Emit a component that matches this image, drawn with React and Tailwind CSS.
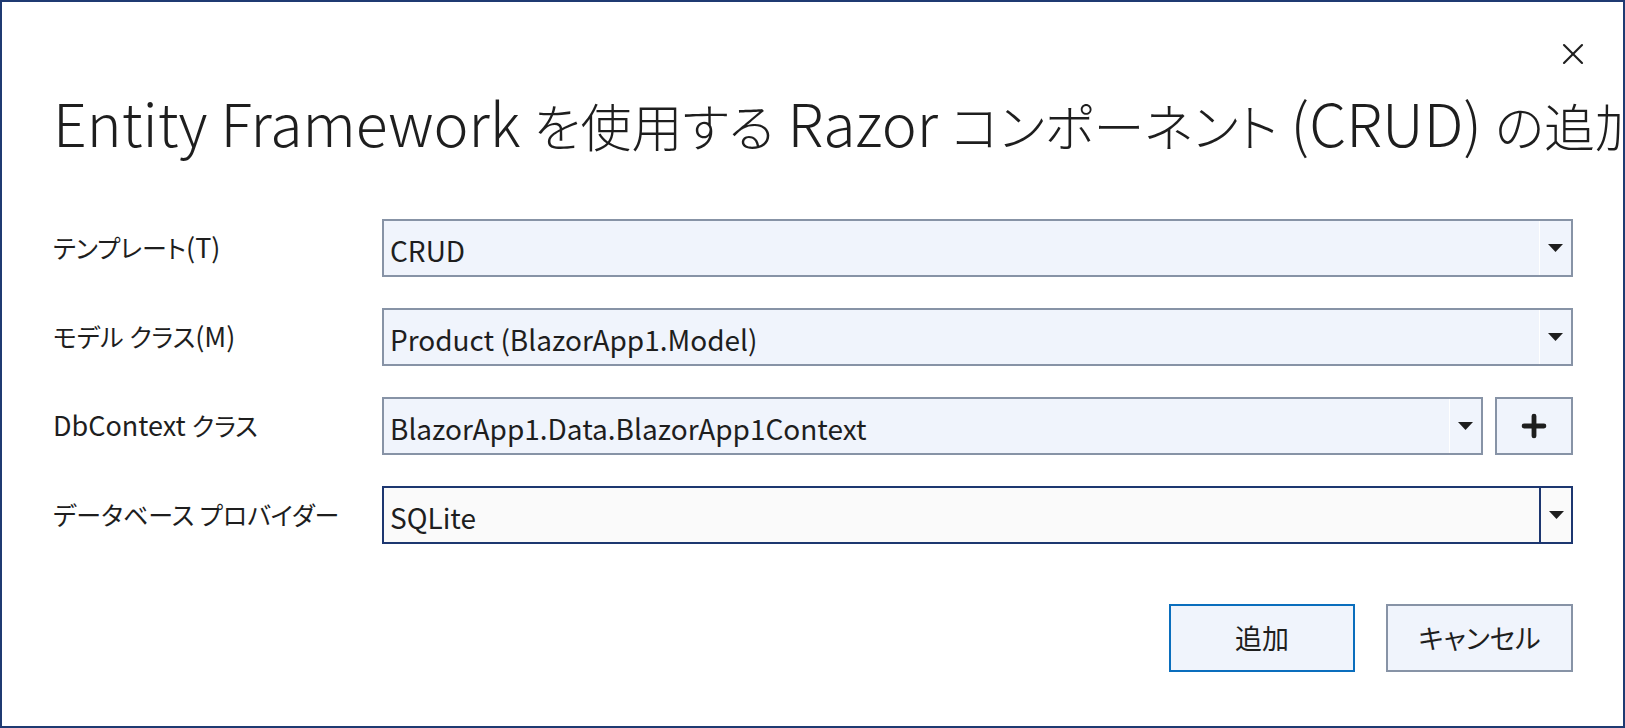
import { X, Plus } from "lucide-react";

const font = { fontFamily: '"Noto Sans CJK JP", "Noto Sans", sans-serif' };

function Caret() {
  return (
    <svg width="15" height="8" viewBox="0 0 15 8">
      <path d="M0 0h15L7.5 8z" fill="#1e1e1e" />
    </svg>
  );
}

function Combo({ value, active }) {
  return (
    <div
      className={`flex h-[58px] flex-1 items-stretch border-2 ${
        active ? "border-[#1d3770] bg-[#fafafa]" : "border-[#8793a6] bg-[#f0f4fc]"
      }`}
    >
      <div className="flex flex-1 items-center pl-[6px] pt-[4px] text-[28px] text-[#1e1e1e]">{value}</div>
      <div className={`flex w-[32px] items-center justify-center ${active ? "border-l-2 border-[#1d3770]" : "border-l border-white"}`}>
        <Caret />
      </div>
    </div>
  );
}

// japanese runs are set a bit smaller than the latin ones
const J = ({ children }) => <span className="text-[25px]">{children}</span>;
const T = ({ children }) => <span className="text-[51px]">{children}</span>;

const rows = [
  { label: <><J>テンプレート</J>(T)</>, value: "CRUD" },
  { label: <><J>モデル クラス</J>(M)</>, value: "Product (BlazorApp1.Model)" },
  { label: <>DbContext <J>クラス</J></>, value: "BlazorApp1.Data.BlazorApp1Context", plus: true },
  { label: <J>データベース プロバイダー</J>, value: "SQLite", active: true },
];

export default function App() {
  return (
    <div style={font} className="flex h-[728px] w-[1625px] flex-col overflow-hidden border-2 border-[#1f3a72] bg-white text-[#1e1e1e] [font-feature-settings:'palt']">
      <div className="flex justify-end pr-[32px] pt-[34px]">
        <X size={36} strokeWidth={1.4} />
      </div>
      <h1 className="mt-[14px] whitespace-nowrap pl-[51px] text-[59px] font-light leading-[72px]">
        Entity Framework <T>を使用する</T> Razor <T>コンポーネント</T> (CRUD) <T>の追加</T>
      </h1>
      <div className="mt-[58px] flex flex-col gap-[31px] pl-[51px] pr-[50px]">
        {rows.map((r, i) => (
          <div key={i} className="flex items-center">
            <div className="w-[329px] pb-[2px] text-[27px] leading-[36px]">{r.label}</div>
            <div className="flex flex-1 gap-[12px]">
              <Combo value={r.value} active={r.active} />
              {r.plus && (
                <div className="flex h-[58px] w-[78px] items-center justify-center border-2 border-[#8793a6] bg-[#f0f4fc]">
                  <Plus size={34} strokeWidth={3.4} />
                </div>
              )}
            </div>
          </div>
        ))}
      </div>
      <div className="mt-[60px] flex justify-end gap-[31px] pr-[50px]">
        <button className="h-[68px] w-[186px] border-2 border-[#0a6ebd] bg-[#f0f4fc] text-[27px]">追加</button>
        <button className="h-[68px] w-[187px] border-2 border-[#8793a6] bg-[#f0f4fc] text-[27px]">キャンセル</button>
      </div>
    </div>
  );
}
